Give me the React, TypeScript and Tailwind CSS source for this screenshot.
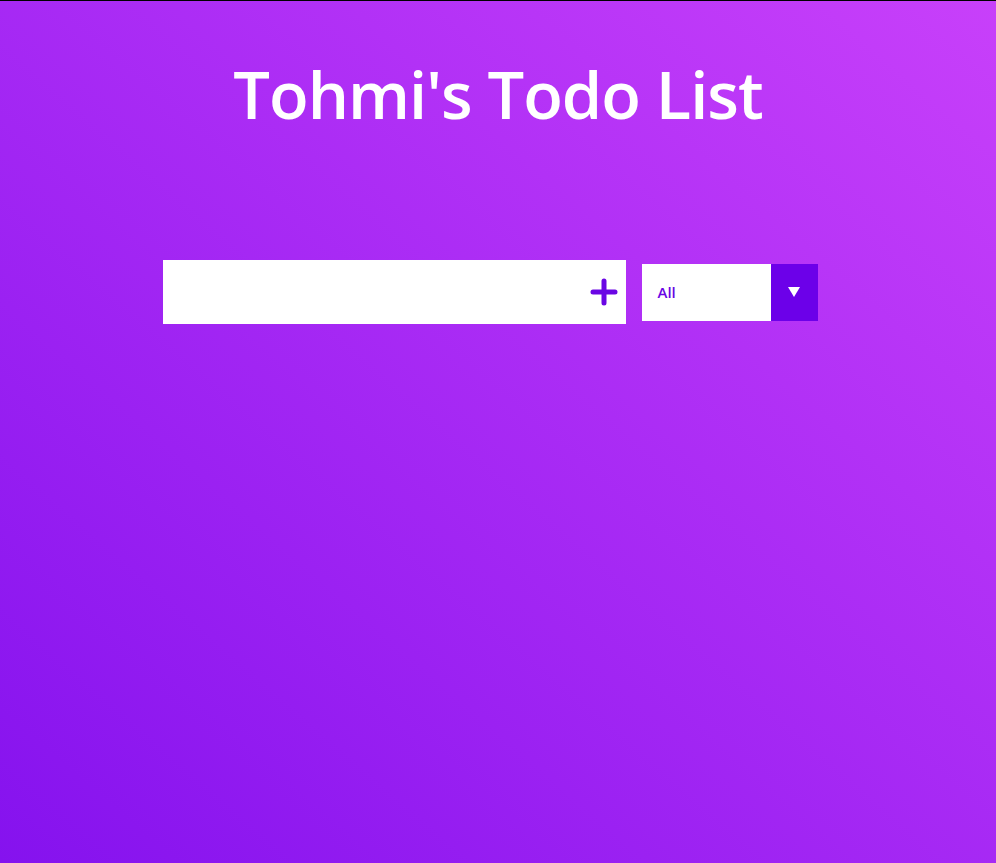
export default function App() {
  return (
    <div
      className="min-h-[863px] w-full border-t border-black bg-[linear-gradient(to_top_right,#8512ee,#c840fa)] font-['Open_Sans',sans-serif]"
    >
      {/* header */}
      <header className="flex justify-center pt-[45px]">
        <h1 className="text-[65px] font-semibold leading-[96px] tracking-[-1px] text-white">
          Tohmi's Todo List
        </h1>
      </header>

      {/* form */}
      <form className="mt-[118px] flex items-center justify-center">
        <div className="flex h-16 w-[463px] items-center bg-white">
          <input
            type="text"
            className="h-full flex-1 bg-transparent px-4 text-lg outline-none"
          />
          <button type="button" className="mr-[2px] flex h-12 w-10 items-center justify-center">
            <svg width="28" height="28" viewBox="0 0 28 28">
              <path
                d="M14 3v22M3 14h22"
                stroke="#6a06e4"
                strokeWidth="5"
                strokeLinecap="round"
              />
            </svg>
          </button>
        </div>
        <div className="mx-4 flex h-[57px] w-[176px] items-stretch bg-white">
          <div className="flex flex-1 items-center pl-4 text-[15px] font-semibold text-[#6a06e4]">
            All
          </div>
          <div className="flex w-[47px] items-center justify-center bg-[#6c00e9]">
            <svg width="14" height="12" viewBox="0 0 14 12">
              <path d="M1 1h12L7 11z" fill="white" />
            </svg>
          </div>
        </div>
      </form>
    </div>
  );
}
